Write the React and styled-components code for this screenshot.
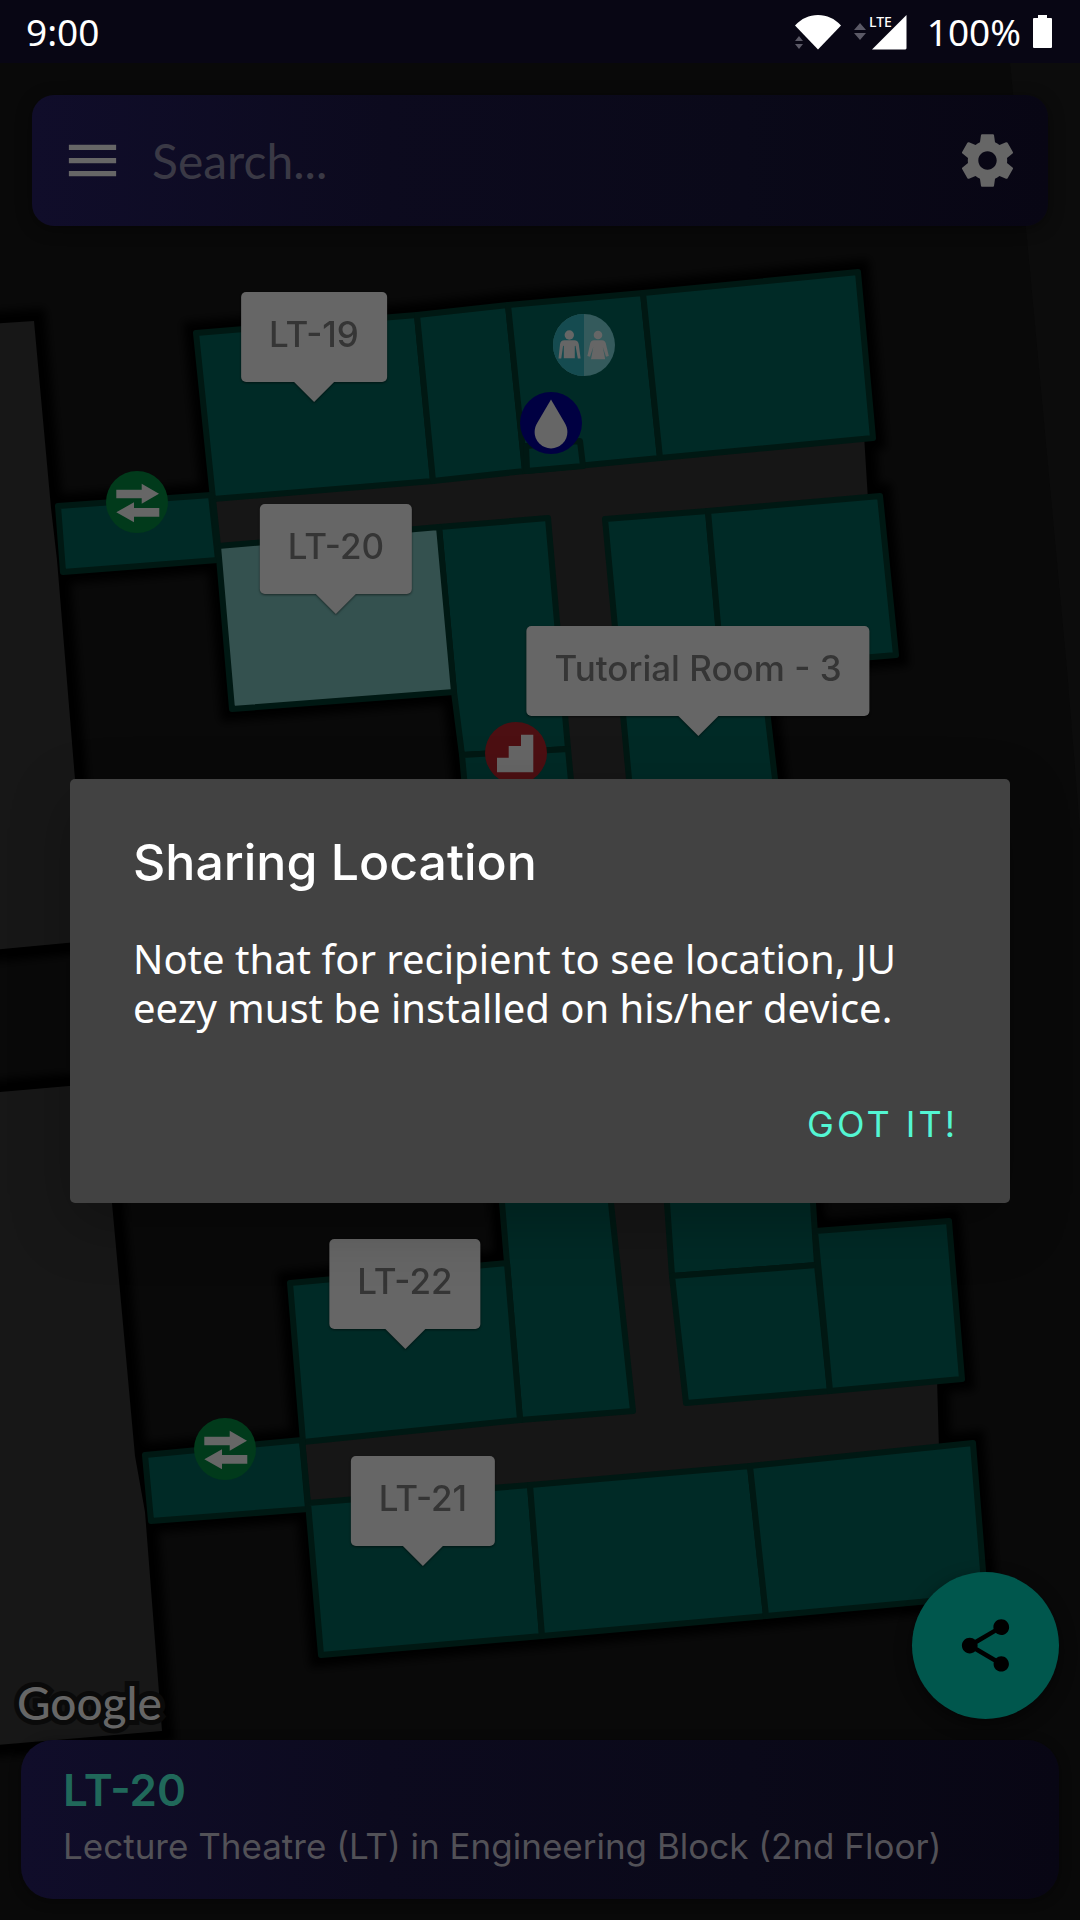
import React, { useState } from "react";
import styled, { createGlobalStyle } from "styled-components";
import { MdMenu, MdShare } from "react-icons/md";

const sans = `Inter, "Noto Sans", sans-serif`;
const human = `"Noto Sans", "Open Sans", sans-serif`;

const GlobalStyle = createGlobalStyle`
  *, *::before, *::after { box-sizing: border-box; }
  body { margin: 0; background: #090909; font-family: ${sans}; }
  button, input { font: inherit; color: inherit; }
`;

/* Map, controls and dialog share one grid cell, stacked in order. */
const Screen = styled.div`
  display: grid;
  min-height: 100vh;
  overflow: hidden;
  > * { grid-area: 1 / 1; min-width: 0; }
`;

/* ---------- Map ---------- */

const MapLayer = styled.main`
  position: relative;
  overflow: hidden;
`;

const MapDrawing = styled.svg`
  position: absolute;
  inset: 0;
  width: 1080px;
  height: 1920px;
`;

const Pin = styled.button`
  position: absolute;
  left: ${(p) => p.$x}px;
  top: ${(p) => p.$y}px;
  transform: translate(-50%, -100%);
  display: flex;
  flex-direction: column;
  align-items: center;
  padding: 0;
  border: 0;
  background: none;
  filter: drop-shadow(0 1px 1px rgba(0, 0, 0, 0.5));
`;

const PinLabel = styled.span`
  padding: 20px 28px 26px;
  border-radius: 5px;
  background: #666;
  color: #353535;
  font-size: 35px;
  font-weight: 500;
  line-height: 44px;
  white-space: nowrap;
`;

const PinTip = styled.span`
  border: solid transparent;
  border-width: 20px 20px 0;
  border-top-color: #666;
`;

/* ---------- Controls ---------- */

const Chrome = styled.div`
  position: relative;
  display: flex;
  flex-direction: column;
`;

const StatusBar = styled.header`
  display: flex;
  align-items: center;
  justify-content: space-between;
  height: 63px;
  padding: 0 28px 0 26px;
  background: #080614;
  color: #fff;
  font: 37px/63px ${human};
`;

const StatusGroup = styled.div`
  display: flex;
  align-items: center;
  gap: 12px;
`;

const BatteryLevel = styled.span`
  padding-left: 7px;
`;

const SearchBar = styled.form`
  display: flex;
  align-items: center;
  gap: 28px;
  margin: 32px 32px 0;
  height: 131px;
  padding: 0 29px;
  border-radius: 22px;
  background: linear-gradient(90deg, #100d2a 0%, #0c0a1e 35%, #0a0919 70%, #080614 100%);
  box-shadow: 0 3px 16px rgba(0, 0, 0, 0.4);
  color: #666;
`;

const IconButton = styled.button`
  display: flex;
  flex: none;
  padding: 0;
  border: 0;
  background: none;
  svg { width: 63px; height: 63px; }
`;

const SearchInput = styled.input`
  flex: 1;
  min-width: 0;
  padding: 0;
  border: 0;
  outline: 0;
  background: none;
  font: 48px/60px Lato, sans-serif;
  &::placeholder { color: #3a3945; opacity: 1; }
`;

const BottomArea = styled.div`
  display: flex;
  flex-direction: column;
  gap: 21px;
  margin-top: auto;
  padding: 21px;
`;

const MapActions = styled.div`
  display: flex;
  align-items: flex-end;
  justify-content: space-between;
`;

const Attribution = styled.a`
  margin-left: -4px;
  color: #666;
  font: 500 46px/32px Lato, sans-serif;
  text-decoration: none;
  -webkit-text-stroke: 10px #0a0a0a;
  paint-order: stroke fill;
`;

const ShareButton = styled.button`
  display: flex;
  align-items: center;
  justify-content: center;
  width: 147px;
  height: 147px;
  padding: 0;
  border: 0;
  border-radius: 50%;
  background: #00574d;
  box-shadow: 0 6px 16px rgba(0, 0, 0, 0.5);
  color: #000;
  svg { width: 63px; height: 63px; }
`;

const PlaceCard = styled.section`
  padding: 23px 42px 31px;
  border-radius: 32px;
  background: linear-gradient(90deg, #100d2a 0%, #0c0a1e 35%, #0a0919 70%, #080614 100%);
  box-shadow: 0 2px 12px rgba(0, 0, 0, 0.4);
`;

const PlaceName = styled.h1`
  margin: 0 0 7px;
  color: #20685a;
  font-size: 44px;
  font-weight: 600;
  line-height: 54px;
`;

const PlaceInfo = styled.p`
  margin: 0;
  color: #525157;
  font-size: 35px;
  line-height: 44px;
`;

/* ---------- Dialog ---------- */

const ModalLayer = styled.div`
  position: relative;
  display: grid;
  align-items: center;
  padding: 62px 70px 0;
`;

const Dialog = styled.section`
  display: flex;
  flex-direction: column;
  padding: 53px 31px 31px 63px;
  border-radius: 5px;
  background: #424242;
  box-shadow: 0 20px 60px rgba(0, 0, 0, 0.25);
  color: #fff;
`;

const DialogTitle = styled.h2`
  margin: 0 0 42px;
  font-size: 50px;
  font-weight: 500;
  line-height: 60px;
`;

const DialogText = styled.p`
  margin: 0 32px 45px 0;
  font: 40px/49px ${human};
`;

const DialogButton = styled.button`
  align-self: flex-end;
  padding: 0 21px;
  border: 0;
  background: none;
  color: #53f6d3;
  font-size: 36px;
  line-height: 95px;
  letter-spacing: 3px;
`;

/* ---------- Map data ---------- */

const buildings = [
  "-40,326 34,321 51,508 57,560 75,779 88,941 -40,953",
  "-40,1096 0,1092 103,1083 112,1203 135,1456 145,1512 162,1731 -40,1748",
];

const corridor =
  "213,495 864,435 868,500 606,522 628,779 668,1203 686,1400 937,1378 939,1450 306,1507 302,1440 520,1415 633,1405 611,1203 570,779 548,518 440,530 218,550";

const rooms = [
  "196,333 417,315 433,481 213,499",
  "417,315 508,305 525,471 433,481",
  "508,305 643,293 660,458 525,471",
  "643,293 858,272 873,438 660,458",
  "526,446 580,441 583,466 527,471",
  "58,506 211,495 218,560 63,572",
  "439,527 548,518 568,749 462,755 454,692",
  "462,755 568,749 611,1203 633,1411 520,1420 502,1203",
  "605,519 708,511 722,667 762,667 775,779 813,1203 817,1265 672,1276 667,1203 629,779",
  "708,511 880,496 896,655 722,670",
  "672,1276 817,1265 830,1391 686,1403",
  "815,1231 949,1221 962,1379 830,1391",
  "290,1283 507,1263 520,1420 303,1442",
  "145,1455 302,1440 308,1509 151,1521",
  "308,1503 530,1485 542,1636 321,1655",
  "530,1485 750,1466 766,1616 542,1636",
  "750,1466 973,1443 985,1596 766,1616",
];

const selectedRoom = "218,546 439,527 454,692 232,709";

const pins = [
  { name: "LT-19", x: 314, y: 402 },
  { name: "LT-20", x: 336, y: 614 },
  { name: "Tutorial Room - 3", x: 698, y: 736 },
  { name: "LT-22", x: 405, y: 1349 },
  { name: "LT-21", x: 423, y: 1566 },
];

const Exit = ({ x, y }) => (
  <g transform={`translate(${x} ${y})`}>
    <circle r="31" fill="#013a1b" />
    <path
      fill="#666"
      d="M-20.7-12.3H4.7v-6L22-8.3 4.7 1.7v-5.4h-25.4zM22.3 6H-3V.2l-17.7 10.1L-3 20.3v-5.6h25.3z"
    />
  </g>
);

const Restroom = ({ x, y }) => (
  <g transform={`translate(${x} ${y})`}>
    <circle r="31" fill="#345a5c" />
    <path d="M0-31a31 31 0 0 0 0 62z" fill="#154b50" />
    <g fill="#666">
      <circle cx="-14.7" cy="-10" r="4.7" />
      <path d="M-19.5-4.8h9.6c2.8 0 4.2 1.4 4.7 4L-3.4 13.5h-2.8L-8.5.8-9.2 1v12.3h-11V1l-.7-.2-1.8 12.7h-2.8L-24-.8c.5-2.6 1.7-4 4.5-4z" />
      <circle cx="14" cy="-10" r="4.3" />
      <path d="M10-4.8h8c2 0 3.2 1 3.8 3L24.8 11l-2.8.8L18.8 2l2.4 12.2H7L9.3 2 6 11.8 3.4 11 6.2-1.8c.6-2 1.8-3 3.8-3z" />
    </g>
  </g>
);

const Water = ({ x, y }) => (
  <g transform={`translate(${x} ${y})`}>
    <circle r="31" fill="#000042" />
    <path
      fill="#666"
      d="M0-23.5 13.5-.5C15.3 2.6 16.4 5.4 16.4 9A16.4 16.4 0 0 1-16.4 9c0-3.6 1.1-6.4 2.9-9.5z"
    />
  </g>
);

const Stairs = ({ x, y }) => (
  <g transform={`translate(${x} ${y})`}>
    <circle r="31" fill="#4c0f12" />
    <path fill="#666" d="M-19 4.7H-7.300V-7H5v-11.3h12.300v37.600H-19z" />
  </g>
);

function CampusMap() {
  return (
    <MapLayer>
      <MapDrawing viewBox="0 0 1080 1920" aria-hidden="true">
        <defs>
          <filter id="soft" x="-10%" y="-10%" width="120%" height="120%">
            <feGaussianBlur stdDeviation="4" />
          </filter>
        </defs>
        <rect width="1080" height="1920" fill="#090909" />
        <path d="M1010 63h70v767l-13-160-39-420z" fill="#0c0c0c" />
        <g fill="#060606" stroke="#060606" strokeWidth="24" filter="url(#soft)">
          {[...buildings, corridor, ...rooms, selectedRoom].map((p) => (
            <polygon key={p} points={p} />
          ))}
        </g>
        {buildings.map((p) => (
          <polygon key={p} points={p} fill="#171717" />
        ))}
        <polygon points={corridor} fill="#161616" />
        <g stroke="#001813" strokeWidth="6" strokeLinejoin="round">
          <g fill="#002a26">
            {rooms.map((p) => (
              <polygon key={p} points={p} />
            ))}
          </g>
          <polygon points={selectedRoom} fill="#34514f" />
          <path d="M213 499l5 47M302 1439l6 64" />
        </g>
        <Restroom x={584} y={345} />
        <Water x={551} y={423} />
        <Exit x={137} y={502} />
        <Stairs x={516} y={753} />
        <Exit x={225} y={1449} />
      </MapDrawing>
      {pins.map((pin) => (
        <Pin key={pin.name} type="button" $x={pin.x} $y={pin.y}>
          <PinLabel>{pin.name}</PinLabel>
          <PinTip />
        </Pin>
      ))}
    </MapLayer>
  );
}

/* ---------- Icons ---------- */

const WifiIcon = () => (
  <svg width="48" height="36" viewBox="0 0 48 36" aria-label="Wi-Fi">
    <path fill="#fff" d="M24 35.5 1 11.5C7.5 4.5 15 1 24 1s16.500 3.500 23 10.500z" />
    <path fill="#5b5966" d="M1 27 5 22l4 5zM1 30h8l-4 5z" />
  </svg>
);

const CellIcon = () => (
  <svg width="54" height="48" viewBox="0 -6 54 48" aria-label="Mobile signal">
    <path fill="#5b5966" d="M0 16l6-7 6 7zM0 19h12l-6 7z" />
    <path fill="#fff" d="M18 35.5 52.5 1v33.500l-1 1z" />
    <text x="15" y="13" fill="#fff" fontFamily="Noto Sans, sans-serif" fontSize="14" fontWeight="500">
      LTE
    </text>
  </svg>
);

const BatteryIcon = () => (
  <svg width="19" height="36" viewBox="0 0 19 36" aria-label="Battery">
    <path fill="#fff" d="M5 1h9v3h4q1 0 1 1v28q0 1-1 1H1q-1 0-1-1V5q0-1 1-1h4z" />
  </svg>
);

const GearIcon = () => (
  <svg viewBox="0 0 24 24" fill="currentColor" aria-hidden="true">
    <path d="M19.43 12.98c.04-.32.07-.64.07-.98s-.03-.66-.07-.98l2.11-1.65c.19-.15.24-.42.12-.64l-2-3.46c-.12-.22-.39-.3-.61-.22l-2.49 1c-.52-.4-1.08-.73-1.69-.98l-.38-2.65C14.46 2.18 14.25 2 14 2h-4c-.25 0-.46.18-.49.42l-.38 2.65c-.61.25-1.17.59-1.69.98l-2.49-1c-.23-.09-.49 0-.61.22l-2 3.46c-.13.22-.07.49.12.64l2.11 1.65c-.04.32-.07.65-.07.98s.03.66.07.98l-2.11 1.65c-.19.15-.24.42-.12.64l2 3.46c.12.22.39.3.61.22l2.49-1c.52.4 1.08.73 1.69.98l.38 2.65c.03.24.24.42.49.42h4c.25 0 .46-.18.49-.42l.38-2.65c.61-.25 1.17-.59 1.69-.98l2.49 1c.23.09.49 0 .61-.22l2-3.46c.12-.22.07-.49-.12-.64zM12 15.5c-1.93 0-3.5-1.57-3.5-3.5s1.57-3.5 3.5-3.5 3.5 1.57 3.5 3.5-1.57 3.5-3.5 3.5z" />
  </svg>
);

export default function App() {
  const [open, setOpen] = useState(true);

  return (
    <>
      <GlobalStyle />
      <Screen>
        <CampusMap />
        <Chrome>
          <StatusBar>
            <time>9:00</time>
            <StatusGroup>
              <WifiIcon />
              <CellIcon />
              <BatteryLevel>100%</BatteryLevel>
              <BatteryIcon />
            </StatusGroup>
          </StatusBar>
          <SearchBar role="search" onSubmit={(e) => e.preventDefault()}>
            <IconButton type="button" aria-label="Menu">
              <MdMenu />
            </IconButton>
            <SearchInput type="text" aria-label="Search" placeholder="Search..." />
            <IconButton type="button" aria-label="Settings">
              <GearIcon />
            </IconButton>
          </SearchBar>
          <BottomArea>
            <MapActions>
              <Attribution href="#map">Google</Attribution>
              <ShareButton type="button" aria-label="Share" onClick={() => setOpen(true)}>
                <MdShare />
              </ShareButton>
            </MapActions>
            <PlaceCard>
              <PlaceName>LT-20</PlaceName>
              <PlaceInfo>Lecture Theatre (LT) in Engineering Block (2nd Floor)</PlaceInfo>
            </PlaceCard>
          </BottomArea>
        </Chrome>
        {open && (
          <ModalLayer>
            <Dialog role="dialog" aria-modal="true" aria-labelledby="share-title">
              <DialogTitle id="share-title">Sharing Location</DialogTitle>
              <DialogText>
                Note that for recipient to see location, JU eezy must be installed on his/her device.
              </DialogText>
              <DialogButton type="button" onClick={() => setOpen(false)}>
                GOT IT!
              </DialogButton>
            </Dialog>
          </ModalLayer>
        )}
      </Screen>
    </>
  );
}
